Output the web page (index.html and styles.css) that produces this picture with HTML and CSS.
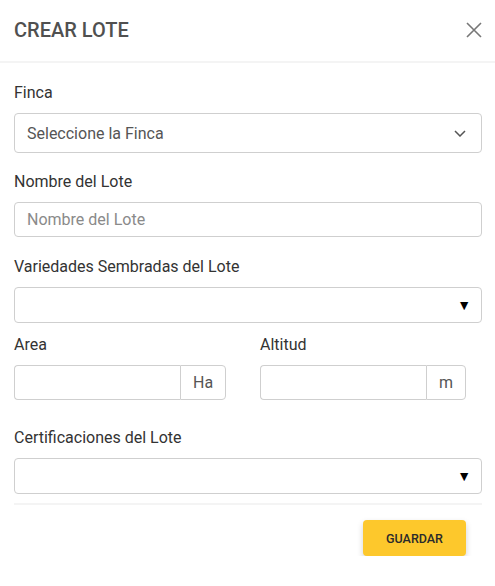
FILE: index.html
```html
<!DOCTYPE html>
<html lang="es">
<head>
<meta charset="utf-8">
<title>Crear Lote</title>
<link rel="stylesheet" href="styles.css">
</head>
<body>
<div class="modal">
  <header class="modal-header">
    <h1 class="modal-title">CREAR LOTE</h1>
    <button class="close-btn" aria-label="Cerrar">
      <svg width="16" height="16" viewBox="0 0 16 16"><path d="M1 1 L15 15 M15 1 L1 15" stroke="#777" stroke-width="1.6" fill="none"/></svg>
    </button>
  </header>
  <div class="modal-body">
    <div class="field">
      <label class="label">Finca</label>
      <div class="control select-lg">
        <span class="value">Seleccione la Finca</span>
        <svg class="chevron" width="12" height="7" viewBox="0 0 12 7"><path d="M1 1 L6 6 L11 1" stroke="#555" stroke-width="1.5" fill="none"/></svg>
      </div>
    </div>
    <div class="field field-name">
      <label class="label">Nombre del Lote</label>
      <div class="control input"><span class="placeholder">Nombre del Lote</span></div>
    </div>
    <div class="field field-tight">
      <label class="label">Variedades Sembradas del Lote</label>
      <div class="control select"><span class="tri">&#9660;</span></div>
    </div>
    <div class="row">
      <div class="col">
        <label class="label">Area</label>
        <div class="group">
          <div class="group-input"></div>
          <div class="addon">Ha</div>
        </div>
      </div>
      <div class="col">
        <label class="label">Altitud</label>
        <div class="group">
          <div class="group-input"></div>
          <div class="addon">m</div>
        </div>
      </div>
    </div>
    <div class="field field-last">
      <label class="label">Certificaciones del Lote</label>
      <div class="control select"><span class="tri">&#9660;</span></div>
    </div>
    <div class="footer">
      <button class="save-btn">GUARDAR</button>
    </div>
  </div>
</div>
</body>
</html>
```
FILE: styles.css
```css
* { box-sizing: border-box; }
html, body { margin: 0; padding: 0; background: #fff; }
body { font-family: Roboto, "Liberation Sans", Arial, sans-serif; color: #333; }
.modal { width: 495px; }
.modal-header {
  height: 63px;
  border-bottom: 2px solid #f4f4f4;
  display: flex;
  align-items: center;
  justify-content: space-between;
  padding: 0 13px 2px 14px;
}
.modal-title { margin: 0; font-size: 20px; font-weight: 500; color: #505050; letter-spacing: 0; }
.close-btn { border: 0; background: none; padding: 0; width: 16px; height: 16px; display: flex; cursor: pointer; }
.modal-body { padding: 20px 13px 0 14px; }
.label { display: block; font-size: 16px; line-height: 20px; color: #333; margin-bottom: 10px; }
.field { margin-bottom: 19px; }
.field-name { margin-bottom: 20px; }
.field-tight { margin-bottom: 12px; }
.field-last { margin-bottom: 9px; }
.control {
  border: 1px solid #cfcfcf;
  border-radius: 4px;
  display: flex;
  align-items: center;
  padding: 0 12px;
  font-size: 16px;
}
.select-lg { height: 40px; justify-content: space-between; padding-right: 15px; }
.select-lg .value { color: #555; }
.input { height: 35px; }
.placeholder { color: #8a8a8a; }
.select { height: 36px; justify-content: flex-end; padding-right: 10px; }
.tri { font-size: 14px; color: #000; line-height: 1; }
.row { display: flex; gap: 35px; margin-bottom: 28px; }
.col { flex: 0 0 auto; width: 211px; }
.col + .col { width: 222px; }
.group { display: flex; height: 35px; width: max-content; }
.group-input {
  width: 166px;
  border: 1px solid #cfcfcf;
  border-right: 0;
  border-radius: 4px 0 0 4px;
}
.addon {
  border: 1px solid #cfcfcf;
  border-radius: 0 4px 4px 0;
  padding: 0 12px;
  display: flex;
  align-items: center;
  font-size: 16px;
  color: #555;
}
.footer {
  border-top: 2px solid #f4f4f4;
  display: flex;
  justify-content: flex-end;
  padding: 15px 16px 0 0;
}
.save-btn {
  border: 0;
  background: #fdc82c;
  border-radius: 4px;
  width: 103px;
  height: 36px;
  font-family: Roboto, "Liberation Sans", Arial, sans-serif;
  font-size: 12.5px;
  font-weight: 500;
  color: #2b2b2b;
  box-shadow: 0 3px 6px rgba(0,0,0,0.18);
  cursor: pointer;
}
```
